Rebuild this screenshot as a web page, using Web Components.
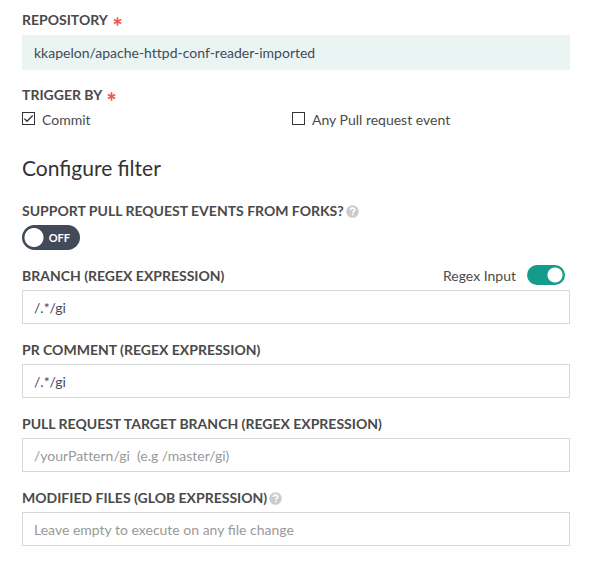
<!DOCTYPE html>
<html lang="en">
<head>
<meta charset="utf-8">
<title>Trigger settings</title>
<style>
  body { margin: 0; background: #fff; }
</style>
</head>
<body>
<trigger-form></trigger-form>
<script>
const define = (name, html, setup) => {
  const template = document.createElement('template');
  template.innerHTML = html;
  customElements.define(name, class extends HTMLElement {
    constructor() {
      super();
      this.attachShadow({ mode: 'open' }).append(template.content.cloneNode(true));
    }
    connectedCallback() {
      if (setup) setup(this, this.shadowRoot);
    }
  });
};

define('required-mark', `
  <style>
    :host { display: inline-flex; margin-left: 5px; padding-top: 2px; }
    svg { display: block; width: 9px; height: 9px; }
  </style>
  <svg viewBox="0 0 9 9" role="img" aria-label="required">
    <path d="M4.5.3v8.4M.9 2.4l7.2 4.2M8.1 2.4.9 6.6" stroke="#ee5a52" stroke-width="1.7" fill="none"/>
  </svg>`);

define('help-mark', `
  <style>
    :host { display: inline-flex; margin-left: 2px; }
    button { display: block; padding: 0; border: 0; background: none; cursor: pointer; }
    svg { display: block; width: 13px; height: 13px; }
  </style>
  <button type="button" aria-label="Help">
    <svg viewBox="0 0 13 13">
      <circle cx="6.5" cy="6.5" r="6.3" fill="#cccccc"/>
      <path d="M4.4 5c.1-1.3 1-1.9 2.2-1.9 1.2 0 2.1.6 2.1 1.7 0 1.5-1.9 1.5-1.9 2.9" fill="none" stroke="#fff" stroke-width="1.7"/>
      <path d="M5.9 8.7h1.8v1.6h-1.8z" fill="#fff"/>
    </svg>
  </button>`);

define('text-field', `
  <style>
    :host { display: block; margin-bottom: 16px; }
    .head { display: flex; align-items: center; height: 20px; margin-bottom: 4px; }
    label { font-weight: 700; line-height: 20px; color: #4a4a4a; }
    slot[name=end] { display: block; margin-left: auto; }
    input {
      display: block; box-sizing: border-box; width: 100%; height: 34px;
      padding: 0 11px; border: 1px solid #d6d9d9; border-radius: 0;
      background: #fff; color: #434a57; font: inherit; outline: 0;
    }
    input::placeholder { color: #999; opacity: 1; }
    :host([filled]) { margin-bottom: 15px; }
    :host([filled]) .head { margin-bottom: 5px; }
    :host([filled]) input { height: 35px; padding: 0 12px; border: 0; background: #eaf4f3; }
    :host([plain-letters]) input { font-variant-ligatures: no-common-ligatures; }
  </style>
  <div class="head"><label for="box"><slot></slot></label><slot name="mark"></slot><slot name="end"></slot></div>
  <input id="box" type="text">`,
  (host, root) => {
    const box = root.querySelector('input');
    box.value = host.getAttribute('value') || '';
    box.placeholder = host.getAttribute('placeholder') || '';
    box.readOnly = host.hasAttribute('filled');
  });

define('check-option', `
  <style>
    :host { display: block; }
    label { display: flex; align-items: center; gap: 7px; line-height: 20px; color: #4a4a4a; }
    .tick { display: grid; width: 13px; height: 13px; margin-bottom: 3px; }
    .tick > * { grid-area: 1 / 1; }
    input { appearance: none; margin: 0; border: 1px solid #333; background: #fff; }
    svg { width: 13px; height: 13px; visibility: hidden; pointer-events: none; z-index: 1; }
    input:checked + svg { visibility: visible; }
  </style>
  <label>
    <span class="tick"><input type="checkbox">
      <svg viewBox="0 0 13 13"><path d="M2.4 6.6 5 9.3l5.7-5.8" fill="none" stroke="#333" stroke-width="1.3"/></svg>
    </span>
    <span><slot></slot></span>
  </label>`,
  (host, root) => { root.querySelector('input').checked = host.hasAttribute('checked'); });

define('fork-switch', `
  <style>
    :host { display: block; margin-bottom: 16px; }
    .head { display: flex; align-items: center; height: 20px; margin-bottom: 4px; }
    label { font-weight: 700; line-height: 20px; color: #4a4a4a; }
    .switch { display: inline-grid; grid-template-columns: 58px; grid-template-rows: 25px; vertical-align: top; }
    .switch > * { grid-area: 1 / 1; }
    input {
      appearance: none; margin: 0; border-radius: 13px; cursor: pointer;
      background: radial-gradient(circle at 12px 50%, #fff 9px, #434a57 10px);
    }
    .state { place-self: center end; padding-right: 10px; font-size: 11px; font-weight: 700; line-height: 20px; color: #fff; pointer-events: none; z-index: 1; }
  </style>
  <div class="head"><label for="fork"><slot></slot></label><slot name="mark"></slot></div>
  <span class="switch"><input id="fork" type="checkbox" role="switch"><span class="state">OFF</span></span>`);

define('mini-switch', `
  <style>
    :host { display: block; padding-right: 5px; }
    label { display: flex; align-items: center; gap: 11px; line-height: 20px; color: #4a4a4a; }
    input {
      appearance: none; width: 38px; height: 20px; margin: 0 0 2px; border-radius: 10px; cursor: pointer;
      background: radial-gradient(circle at 28px 50%, #fff 7px, #139c8b 8px);
    }
  </style>
  <label><span><slot></slot></span><input type="checkbox" role="switch" checked></label>`);

define('trigger-form', `
  <style>
    :host {
      display: block; padding: 10px 22px 3px;
      font: 14px/20px Lato, "Liberation Sans", sans-serif; color: #4a4a4a;
    }
    form { display: flex; flex-direction: column; }
    fieldset { min-width: 0; margin: 0; padding: 0; border: 0; }
    legend { display: flex; align-items: center; height: 20px; padding: 0; font-weight: 700; }
    .options { display: grid; grid-template-columns: 1fr 1fr; padding: 5px 8px 0 0; }
    h2 { margin: 24px 0 19px; font-size: 21px; line-height: 28px; font-weight: 400; color: #333; }
  </style>
  <form>
    <text-field filled plain-letters value="kkapelon/apache-httpd-conf-reader-imported">REPOSITORY<required-mark slot="mark"></required-mark></text-field>
    <fieldset>
      <legend>TRIGGER BY<required-mark></required-mark></legend>
      <div class="options">
        <check-option checked>Commit</check-option>
        <check-option>Any Pull request event</check-option>
      </div>
    </fieldset>
    <h2>Configure filter</h2>
    <fork-switch>SUPPORT PULL REQUEST EVENTS FROM FORKS?<help-mark slot="mark"></help-mark></fork-switch>
    <text-field value="/.*/gi">BRANCH (REGEX EXPRESSION)<mini-switch slot="end">Regex Input</mini-switch></text-field>
    <text-field value="/.*/gi">PR COMMENT (REGEX EXPRESSION)</text-field>
    <text-field plain-letters placeholder="/yourPattern/gi &nbsp;(e.g /master/gi)">PULL REQUEST TARGET BRANCH (REGEX EXPRESSION)</text-field>
    <text-field placeholder="Leave empty to execute on any file change">MODIFIED FILES (GLOB EXPRESSION)<help-mark slot="mark"></help-mark></text-field>
  </form>`);
</script>
</body>
</html>
